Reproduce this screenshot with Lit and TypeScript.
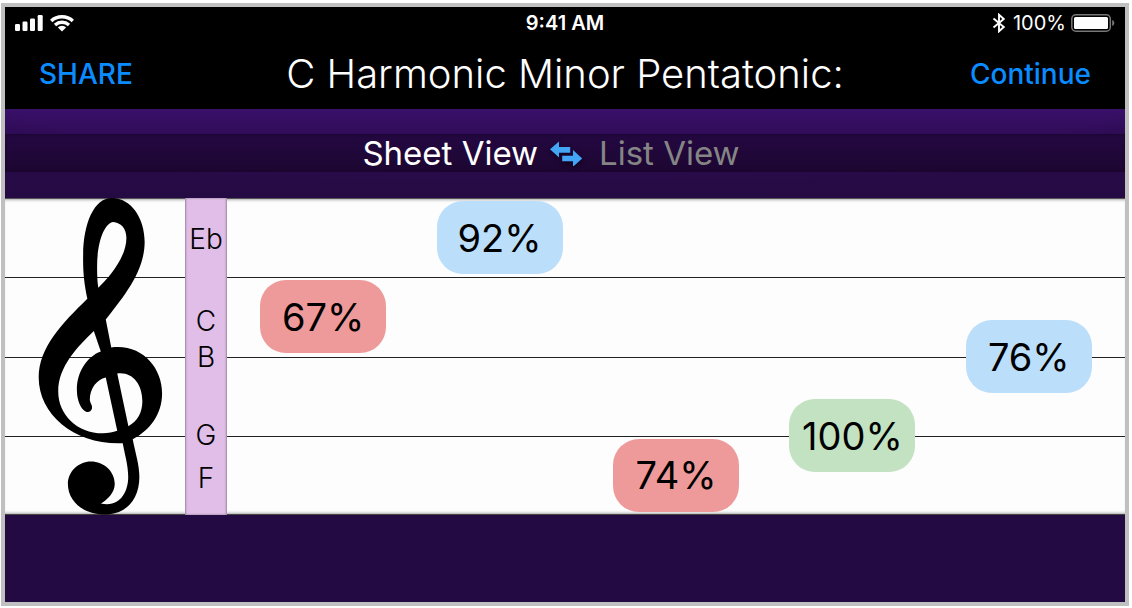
import { LitElement, html, css, svg } from "lit";
import { customElement, property, state } from "lit/decorators.js";
import { classMap } from "lit/directives/class-map.js";

type Tone = "low" | "mid" | "high";

interface Score {
  note: string;
  value: number;
  step: number;
  tone: Tone;
}

const SCORES: Score[] = [
  { note: "C", value: 67, step: 3, tone: "low" },
  { note: "Eb", value: 92, step: 1, tone: "mid" },
  { note: "F", value: 74, step: 7, tone: "low" },
  { note: "G", value: 100, step: 6, tone: "high" },
  { note: "B", value: 76, step: 4, tone: "mid" },
];

@customElement("status-bar")
class StatusBar extends LitElement {
  static styles = css`
    :host {
      display: grid;
      grid-template-columns: 1fr auto 1fr;
      align-items: center;
      height: 32px;
      padding: 0 10px;
      color: #fff;
      font-size: 20px;
    }
    .side {
      display: flex;
      align-items: center;
      gap: 7px;
    }
    .end {
      justify-content: flex-end;
      gap: 5px;
    }
    .time {
      font-weight: 600;
    }
    svg {
      display: block;
    }
  `;

  render() {
    return html`
      <div class="side">
        <svg width="28" height="17" viewBox="0 0 28 17" fill="#fff" role="img" aria-label="Signal">
          <rect x="0" y="9" width="5" height="7" rx="1.2" />
          <rect x="7.5" y="6.5" width="5" height="9.5" rx="1.2" />
          <rect x="15" y="3.5" width="5" height="12.5" rx="1.2" />
          <rect x="22.7" y="0" width="5" height="16" rx="1.2" />
        </svg>
        <svg width="24" height="17" viewBox="0 0 24 17" fill="none" stroke="#fff" stroke-width="3.4" role="img" aria-label="Wi-Fi">
          <path d="M1.2 6C7.2 0.4 16.8 0.4 22.8 6" />
          <path d="M5 10C9 6.400 15 6.400 19 10" />
          <path d="M12 10.8C10.300 10.800 9 11.600 7.900 12.500L12 16.500L16.100 12.500C15 11.600 13.700 10.800 12 10.800Z" fill="#fff" stroke="none" />
        </svg>
      </div>
      <div class="time">9:41 AM</div>
      <div class="side end">
        <svg width="16" height="20" viewBox="0 0 16 20" fill="none" stroke="#fff" stroke-width="1.900" role="img" aria-label="Bluetooth">
          <path d="M1.500 5.500L11.800 14L7 18.300V1.700L11.800 6L1.500 14.500" />
        </svg>
        <span>100%</span>
        <svg width="44" height="18" viewBox="0 0 44 18" role="img" aria-label="Battery">
          <rect x="0.800" y="0.800" width="38.500" height="16.400" rx="4" fill="none" stroke="#777" stroke-width="1.500" />
          <rect x="3" y="3" width="34" height="12" rx="1.500" fill="#fff" />
          <path d="M41.200 6C44 7 44 11 41.200 12Z" fill="#777" />
        </svg>
      </div>
    `;
  }
}

@customElement("treble-staff")
class TrebleStaff extends LitElement {
  @property({ attribute: false }) scores: Score[] = [];

  static styles = css`
    :host {
      display: grid;
      grid-template-columns: 180px 42px 1fr;
      grid-template-rows: minmax(0, 1fr);
      min-height: 300px;
      background: #fdfdfd;
      color: #000;
    }
    .lines {
      grid-area: 1 / 1 / 2 / 4;
      display: grid;
      grid-template-rows: repeat(4, 1fr);
      box-shadow: inset 0 1px 0 #555, inset 0 -1px 0 #444, inset 0 4px 3px -2px #aaa,
        inset 0 -4px 3px -2px #aaa;
    }
    .space + .space {
      border-top: 1px solid #222;
    }
    .clef {
      grid-area: 1 / 1 / 2 / 2;
      z-index: 1;
      contain: size;
      padding-left: 33px;
    }
    .clef svg {
      display: block;
      height: 100%;
    }
    .keys {
      grid-area: 1 / 2 / 2 / 3;
      z-index: 1;
      display: grid;
      grid-template-rows: 82fr 23fr 36fr 35fr 43fr 35fr 8fr 35fr 20fr;
      place-items: center;
      background: #e1bee7;
      box-shadow: inset 1px 0 2px #9d84a2, inset -1px 0 2px #9d84a2;
      font-size: 28px;
      font-weight: 300;
      line-height: 32px;
    }
    .key-2 {
      grid-row: 3;
    }
    .key-3 {
      grid-row: 4;
    }
    .key-4 {
      grid-row: 6;
    }
    .key-5 {
      grid-row: 8;
    }
    .scores {
      grid-area: 1 / 3 / 2 / 4;
      z-index: 1;
      display: grid;
      grid-template-columns: repeat(5, 1fr);
      grid-template-rows: repeat(8, minmax(0, 1fr));
      place-items: center;
      padding: 0 8px;
    }
    .score {
      display: flex;
      align-items: center;
      justify-content: center;
      width: 126px;
      height: 73px;
      border-radius: 26px;
      font-size: 38px;
    }
    .step-1 {
      grid-row: 1 / 3;
    }
    .step-3 {
      grid-row: 3 / 5;
    }
    .step-4 {
      grid-row: 4 / 6;
    }
    .step-6 {
      grid-row: 6 / 8;
    }
    .step-7 {
      grid-row: 7 / 9;
    }
    .col-0 {
      grid-column: 1;
    }
    .col-1 {
      grid-column: 2;
    }
    .col-2 {
      grid-column: 3;
    }
    .col-3 {
      grid-column: 4;
    }
    .col-4 {
      grid-column: 5;
    }
    .low {
      background: #ef9a9a;
    }
    .mid {
      background: #bbdefb;
    }
    .high {
      background: #c2e2c2;
    }
  `;

  private clef() {
    return svg`
      <path fill="#000" fill-rule="evenodd" d="
        M112 198C132 198 145 219 145 242C145 273 122 299 106 320L111.500 348
        C142 344 162.500 368 162.500 394C162.500 415 150 431 133 440
        C136 455 139.700 466 139.700 478C139.700 501 126 515.500 105 515.500
        C83 515.500 68 502 68 485C68 472 79 462.300 91 462.300C104 462.300 115 472 115 485
        C115 493 108 501 101 504.500C120 509 128.500 493 128.500 478C128.500 466 125 455 123 444
        C76 446 38.700 416 38.700 378C38.700 348 62 324 87.500 299
        C84 282 83 270 83.300 255C83.500 224 94 198 112 198Z
        M113.500 222C104 223 97.300 244 97.300 266C97.300 275 97.500 281 98.500 288
        C110 277 126.700 257 126.700 238C126.700 228 121 223 113.500 222Z
        M94 331.500C78 347 58.300 367 58.300 392C58.300 415 77 434 103 434C109 434 113 433 117.500 431.500
        L106 378C97 380 90 389 90 400C90 404 92.500 405 92.200 409C91.500 413 87 414 84 411
        C79 406 77 398 77 390C77 373 87 357 101 352Z
        M117.500 374C133 372 142.700 385 142.700 402C142.700 413 138 422 128.700 427Z" />
    `;
  }

  render() {
    return html`
      <div class="lines">
        <div class="space"></div>
        <div class="space"></div>
        <div class="space"></div>
        <div class="space"></div>
      </div>
      <div class="clef">
        <svg viewBox="38 198 126 318" role="img" aria-label="Treble clef">${this.clef()}</svg>
      </div>
      <div class="keys">
        ${["Eb", "C", "B", "G", "F"].map(
          (name, i) => html`<span class="key-${i + 1}">${name}</span>`
        )}
      </div>
      <div class="scores">
        ${this.scores.map(
          (s, i) => html`<div class="score step-${s.step} col-${i} ${s.tone}">${s.value}%</div>`
        )}
      </div>
    `;
  }
}

@customElement("app-root")
class AppRoot extends LitElement {
  @state() private view: "sheet" | "list" = "sheet";

  static styles = css`
    :host {
      display: flex;
      box-sizing: border-box;
      min-height: 100vh;
      padding: 3px 3px 2px 1px;
      background: #fff;
      font-family: Inter, "Liberation Sans", sans-serif;
    }
    .device {
      flex: 1;
      display: flex;
      flex-direction: column;
      min-width: 0;
      border: 4px solid #c0c0c0;
      background: #240a42;
    }
    button {
      margin: 0;
      padding: 0;
      border: 0;
      background: none;
      color: inherit;
      font: inherit;
      cursor: pointer;
    }
    .top {
      background: #000;
    }
    .nav {
      display: grid;
      grid-template-columns: 1fr auto 1fr;
      align-items: center;
      height: 70px;
      padding: 0 34px;
    }
    .action {
      justify-self: start;
      color: #0a8cff;
      font-size: 28px;
      font-weight: 500;
      line-height: 32px;
    }
    .last {
      justify-self: end;
    }
    h1 {
      margin: 0;
      color: #fff;
      font-size: 40px;
      font-weight: 300;
      line-height: 48px;
    }
    .band {
      padding: 25px 0 26px;
      background: radial-gradient(ellipse 60% 90% at 50% 0, #3b116b00 80%, #240a4266 100%),
        linear-gradient(#3a106a, #300c58 28%, #290b4a 70%, #250a44);
    }
    .switch {
      display: flex;
      align-items: center;
      justify-content: center;
      gap: 12px;
      height: 38px;
      padding-right: 28px;
      background: linear-gradient(#240842, #1c0630);
      box-shadow: inset 0 1px 3px #12032088;
      color: #858585;
      font-size: 33px;
      line-height: 38px;
    }
    .active {
      color: #fff;
    }
    .swap svg {
      display: block;
      filter: drop-shadow(0 2px 2px #0008);
    }
    treble-staff {
      flex: 1;
    }
    .bottom {
      height: 87px;
    }
  `;

  private toggle() {
    this.view = this.view === "sheet" ? "list" : "sheet";
  }

  render() {
    return html`
      <main class="device">
        <header class="top">
          <status-bar></status-bar>
          <nav class="nav">
            <button class="action">SHARE</button>
            <h1>C Harmonic Minor Pentatonic:</h1>
            <button class="action last">Continue</button>
          </nav>
        </header>
        <div class="band">
          <div class="switch">
            <button
              class=${classMap({ active: this.view === "sheet" })}
              @click=${() => (this.view = "sheet")}
            >
              Sheet View
            </button>
            <button class="swap" aria-label="Swap view" @click=${this.toggle}>
              <svg width="37" height="26" viewBox="0 -1 37 26" fill="#42a5f5">
                <path d="M0 8.200L9 0.500V6H20.200V11.700H9V16.500Z" />
                <path d="M12.200 14.700H23V9L32.200 17.400L23 25.700V20.200H12.200Z" stroke="#220a3d" stroke-width="1" paint-order="stroke" />
              </svg>
            </button>
            <button
              class=${classMap({ active: this.view === "list" })}
              @click=${() => (this.view = "list")}
            >
              List View
            </button>
          </div>
        </div>
        <treble-staff .scores=${SCORES}></treble-staff>
        <footer class="bottom"></footer>
      </main>
    `;
  }
}
